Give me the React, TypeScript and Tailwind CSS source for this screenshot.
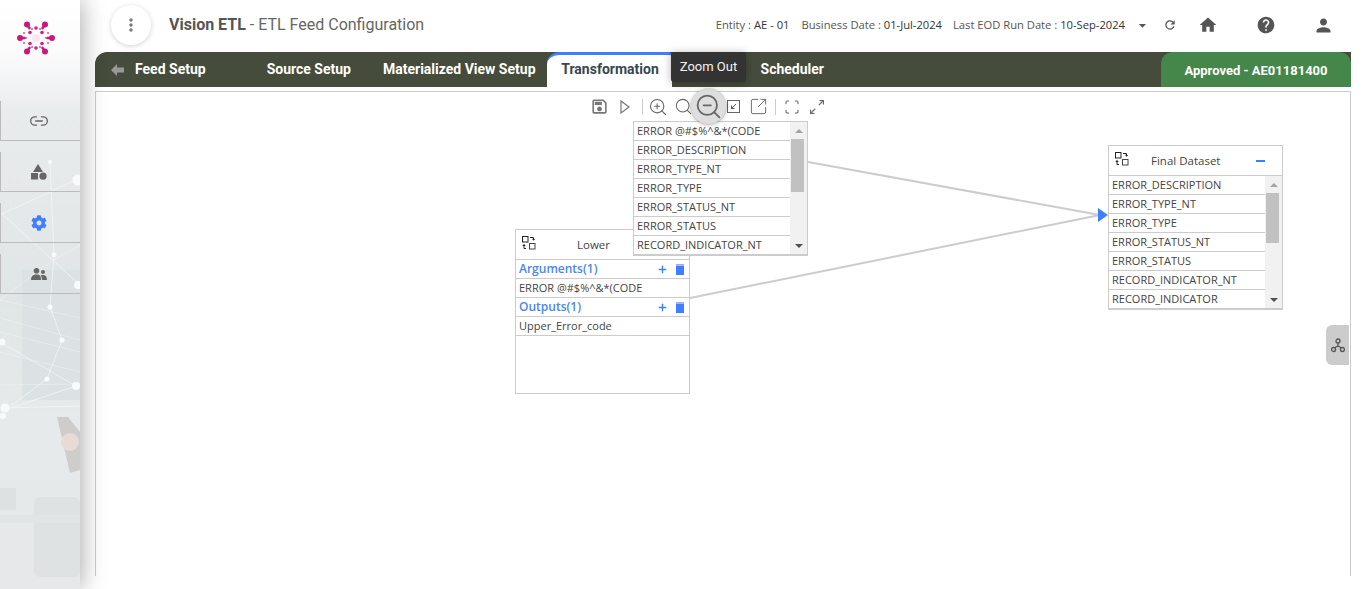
import React from "react";
import { Link2, ZoomIn, Search, ZoomOut, SquareArrowOutUpRight, Scan, Plus } from "lucide-react";
import { FaCog } from "react-icons/fa";
import { MdMoreVert, MdRefresh, MdHome, MdHelp, MdPerson, MdOutlineSave, MdArrowDropDown } from "react-icons/md";
import { BsArrowsAngleExpand } from "react-icons/bs";

const roboto = "font-['Roboto',sans-serif]";
const open = "font-['Open_Sans',sans-serif]";

function Logo() {
  const big: [number, number][] = [[-9, -13.5], [9, -13.5], [-16, 0], [16, 0], [-9, 13.5], [9, 13.5]];
  const mid: [number, number][] = [[0, -10], [0, 10], [-6, -5.5], [6, -5.5], [-6, 5.5], [6, 5.5]];
  const small: [number, number][] = [[-10, 0], [10, 0], [-4, -9], [4, -9], [-4, 9], [4, 9], [-12, -5], [12, -5], [-12, 5], [12, 5]];
  return (
    <svg width="38" height="38" viewBox="0 0 38 38">
      {big.map(([x, y]) => (
        <g key={`${x}${y}`}>
          <line x1={19 + x} y1={19 + y} x2={19 + x * 0.72} y2={19 + y * 0.72} stroke="#c8187f" strokeWidth="2.4" strokeLinecap="round" />
          <circle cx={19 + x} cy={19 + y} r={3} fill="#c8187f" />
        </g>
      ))}
      {mid.map(([x, y]) => <circle key={`${x}${y}`} cx={19 + x} cy={19 + y} r={1.8} fill="#d02085" />)}
      {small.map(([x, y]) => <circle key={`${x}${y}`} cx={19 + x} cy={19 + y} r={1} fill="#e0509f" />)}
      <circle cx="19" cy="19" r="4" fill="#fbe6f1" />
    </svg>
  );
}

function SideBg() {
  return (
    <svg className="absolute inset-0 w-full h-full" viewBox="0 0 80 589" preserveAspectRatio="none">
      <defs>
        <linearGradient id="sb" x1="0" y1="0" x2="0" y2="1">
          <stop offset="0" stopColor="#ffffff" />
          <stop offset="0.09" stopColor="#fbfbfb" />
          <stop offset="0.19" stopColor="#e9eced" />
          <stop offset="0.5" stopColor="#e0e5e6" />
          <stop offset="0.72" stopColor="#e6eaeb" />
          <stop offset="1" stopColor="#e6e8e9" />
        </linearGradient>
      </defs>
      <rect width="80" height="589" fill="url(#sb)" />
      <rect x="22" y="270" width="58" height="130" fill="#dce1e3" />
      <rect x="34" y="497" width="46" height="80" rx="6" fill="#dfe2e3" />
      <rect x="0" y="488" width="16" height="22" fill="#dee1e2" />
      <rect x="0" y="515" width="80" height="8" fill="#e2e5e6" />
      <path d="M57 417 L68 417 L80 432 L80 470 L70 473 Z" fill="#cfcccc" />
      <ellipse cx="70" cy="442" rx="9" ry="9" fill="#e6dcd5" />
      <g stroke="#f3f7f8" strokeWidth="1" fill="none">
        <path d="M0 215 L80 178 M0 212 L80 285 M0 342 L76 386 M50 307 L62 340 L47 379 L5 410 M76 386 L5 410 M0 408 L80 406 M50 162 L54 255 L50 307" opacity="0.75" />
        <path d="M0 300 L80 318 M0 318 L80 340 M0 332 L80 352 M0 352 L80 372 M0 385 L80 384 M80 245 L50 262 L0 300" opacity="0.45" />
      </g>
      <g fill="#f8fbfc">
        <circle cx="50" cy="162" r="2" />
        <circle cx="78" cy="180" r="5.5" />
        <circle cx="54" cy="255" r="2.5" />
        <circle cx="78" cy="285" r="4" />
        <circle cx="50" cy="307" r="2.6" />
        <circle cx="62" cy="340" r="2.6" />
        <circle cx="2" cy="342" r="3.5" />
        <circle cx="47" cy="379" r="2.6" />
        <circle cx="76" cy="386" r="4" />
        <circle cx="5" cy="408" r="4.5" />
        <circle cx="3" cy="416" r="3" />
      </g>
    </svg>
  );
}

function NodeIcon() {
  return (
    <svg width="14" height="14" viewBox="0 0 14 14" fill="none" stroke="#222" strokeWidth="1">
      <rect x="0.5" y="0.5" width="5.5" height="5.5" />
      <rect x="7.5" y="7.5" width="5.5" height="5.5" stroke="#444" />
      <path d="M8 1.5h3.5v2.5M10.3 3l1.2 1.2 1.2-1.2" />
      <path d="M2 8v4.5h2M0.7 9.5h2.6" />
    </svg>
  );
}

function Row({ children }: { children: React.ReactNode }) {
  return (
    <div className={`h-[19px] shrink-0 border-b border-[#ccc] pl-[3px] text-[11px] leading-[18px] text-[#444] whitespace-nowrap ${open}`}>
      {children}
    </div>
  );
}

function ScrollTrack({ top, height }: { top: number; height: number }) {
  return (
    <div className="relative w-[17px] shrink-0 bg-[#f1f1f1]">
      <div className="absolute left-1/2 top-[7px] -translate-x-1/2 border-x-[4px] border-b-[4px] border-x-transparent border-b-[#a3a3a3]" />
      <div className="absolute left-[1px] w-[13px] bg-[#c1c1c1]" style={{ top, height }} />
      <div className="absolute left-1/2 bottom-[6px] -translate-x-1/2 border-x-[4px] border-t-[4px] border-x-transparent border-t-[#505050]" />
    </div>
  );
}

function Section({ label }: { label: string }) {
  return (
    <div className={`h-[19px] shrink-0 border-b border-[#ccc] pl-[3px] pr-[5px] flex items-center justify-between text-[12px] font-semibold text-[#4a86f7] ${open}`}>
      <span>{label}</span>
      <span className="flex items-center gap-[8px] text-[#3f7fff]">
        <Plus size={11} strokeWidth={3} />
        <svg width="8" height="11" viewBox="0 0 8 11">
          <rect x="0" y="0" width="8" height="1" fill="#8fb4fb" />
          <rect x="0" y="1.5" width="8" height="9.5" fill="#3f7fff" />
        </svg>
      </span>
    </div>
  );
}

const upper = ["ERROR @#$%^&*(CODE", "ERROR_DESCRIPTION", "ERROR_TYPE_NT", "ERROR_TYPE", "ERROR_STATUS_NT", "ERROR_STATUS", "RECORD_INDICATOR_NT"];
const finalRows = ["ERROR_DESCRIPTION", "ERROR_TYPE_NT", "ERROR_TYPE", "ERROR_STATUS_NT", "ERROR_STATUS", "RECORD_INDICATOR_NT", "RECORD_INDICATOR"];

function Tab({ children, className }: { children: React.ReactNode; className: string }) {
  return <span className={`text-[14px] font-bold text-white ${className}`}>{children}</span>;
}

const navItem = "h-[40px] border-l border-b border-[#bbb] flex items-center justify-center pr-[4px]";

export default function App() {
  return (
    <div className={`relative flex h-[589px] w-[1366px] overflow-hidden bg-white ${roboto}`}>
      <aside className="relative z-10 w-[80px] shrink-0 shadow-[0_0_26px_rgba(0,0,0,0.38)]">
        <SideBg />
        <div className="relative flex justify-center pt-[19px] pr-[8px] h-[101px]">
          <Logo />
        </div>
        <nav className="relative flex flex-col gap-[11px] text-[#666]">
          <div className={navItem}><Link2 size={20} strokeWidth={1.6} /></div>
          <div className={navItem}>
            <svg width="16" height="16" viewBox="0 0 16 16" fill="#666">
              <path d="M7 0 12 8H2Z" />
              <rect x="0" y="9" width="7" height="6.5" />
              <circle cx="12" cy="12.2" r="3.6" />
            </svg>
          </div>
          <div className={`${navItem} text-[#3f7fff]`}><FaCog size={16} /></div>
          <div className={navItem}>
            <svg width="16" height="12" viewBox="0 0 16 12" fill="#666">
              <circle cx="5.5" cy="2.8" r="2.8" />
              <path d="M0 12c0-4 2-5.5 5.5-5.5S10 8 10 12Z" />
              <circle cx="12" cy="4" r="2" />
              <path d="M11 12c0-2-.3-3.5-1.3-4.6.7-.3 1.4-.4 2.3-.4 2.6 0 4 1.6 4 5Z" />
            </svg>
          </div>
        </nav>
      </aside>

      <main className="relative flex-1 min-w-0 pl-[15px] pr-[15px]">
        <header className="h-[52px] flex items-center">
          <div className="ml-[16px] w-[40px] h-[40px] mt-[-2px] rounded-full bg-white shadow-[0_1px_5px_rgba(0,0,0,0.18)] flex items-center justify-center text-[#777]">
            <MdMoreVert size={20} />
          </div>
          <div className="ml-[18px] mt-[-2px] text-[16px] text-[#666] whitespace-nowrap">
            <span className="font-bold text-[#555]">Vision ETL</span> - ETL Feed Configuration
          </div>
          <div className={`ml-auto mt-[-2px] flex items-center text-[11.2px] text-[#555] whitespace-nowrap ${open}`}>
            <span>Entity : <span className="text-[#333]">AE - 01</span></span>
            <span className="ml-[12px]">Business Date : <span className="text-[#333]">01-Jul-2024</span></span>
            <span className="ml-[11px]">Last EOD Run Date : <span className="text-[#333]">10-Sep-2024</span></span>
            <MdArrowDropDown size={17} className="ml-[9px] text-[#555]" />
            <MdRefresh size={14} className="ml-[12px] text-[#555]" />
            <MdHome size={20} className="ml-[21px] text-[#555]" />
            <MdHelp size={20} className="ml-[38px] text-[#555]" />
            <MdPerson size={21} className="ml-[37px] mr-[17px] text-[#555]" />
          </div>
        </header>

        <div className="relative h-[35px] rounded-t-[12px] rounded-tr-none bg-[#464c3b] flex items-center">
          <svg width="13" height="12" viewBox="0 0 13 12" className="ml-[16px]" fill="#999">
            <path d="M0 6 6 0V3.5H13V8.5H6V12Z" />
          </svg>
          <Tab className="ml-[11px]">Feed Setup</Tab>
          <Tab className="ml-[61px]">Source Setup</Tab>
          <Tab className="ml-[32px]">Materialized View Setup</Tab>
          <div className="ml-[11px] h-[35px] w-[125px] rounded-tl-[12px] rounded-tr-[4px] border-t-[3px] border-[#3f7fff] bg-white flex items-center justify-center pb-[3px] pl-[2px]">
            <span className="text-[14px] font-bold text-[#37474f]">Transformation</span>
          </div>
          <Tab className="ml-[89px]">Scheduler</Tab>
          <div className="ml-auto h-[35px] w-[190px] rounded-t-[12px] bg-[#45864a] flex items-center justify-center pt-[2px]">
            <span className="text-[13px] font-bold text-white">Approved - AE01181400</span>
          </div>
          <div className="absolute left-[576px] top-0 z-20 h-[30px] w-[75px] rounded-[3px] bg-[#333] flex items-center justify-center text-[13px] text-[#f2f2f2] shadow-[0_1px_8px_rgba(0,0,0,0.3)]">
            Zoom Out
          </div>
        </div>

        <section className="relative mt-[4px] h-[485px] border border-b-0 border-[#ccc]">
          <div className="relative flex items-center h-[29px] pl-[494px] text-[#666]">
            <MdOutlineSave size={19} className="text-[#777]" />
            <svg width="10" height="14" viewBox="0 0 10 14" fill="none" stroke="#777" strokeWidth="1.2" className="ml-[11px]">
              <path d="M1 1 9 7 1 13Z" />
            </svg>
            <span className="ml-[12px] h-[16px] w-px bg-[#ccc]" />
            <ZoomIn size={20} strokeWidth={1.3} className="ml-[5px]" />
            <Search size={19} strokeWidth={1.3} className="ml-[6px]" />
            <span className="relative z-10 ml-[-2px] flex h-[35px] w-[35px] items-center justify-center rounded-full bg-[#dedede] shadow-[0_0_0_1px_rgba(0,0,0,0.08),0_1px_4px_rgba(0,0,0,0.25)]">
              <ZoomOut size={29} strokeWidth={1.5} />
            </span>
            <span className="ml-[1px] flex h-[13px] w-[13px] items-center justify-center border border-[#666]">
              <svg width="7" height="7" viewBox="0 0 7 7" fill="none" stroke="#555"><path d="M6 1 1.5 5.5M1.5 2.5v3h3" /></svg>
            </span>
            <SquareArrowOutUpRight size={19} strokeWidth={1.2} className="ml-[9px]" />
            <span className="ml-[7px] h-[16px] w-px bg-[#ccc]" />
            <Scan size={16} strokeWidth={1.6} className="ml-[8px]" />
            <BsArrowsAngleExpand size={14} stroke="currentColor" strokeWidth={0.5} className="ml-[10px]" />
          </div>

          <svg className="absolute left-0 top-0 pointer-events-none" width="1255" height="320">
            <path d="M712 70 L1004 123" stroke="#ccc" strokeWidth="2" fill="none" />
            <path d="M594 206 L1004 123" stroke="#ccc" strokeWidth="2" fill="none" />
            <path d="M1002 116 L1012 123 L1002 130 Z" fill="#3f7fff" />
          </svg>

          <div className="absolute left-[419px] top-[137px] h-[165px] w-[175px] border border-[#ccc] bg-white flex flex-col">
            <div className="h-[30px] shrink-0 border-b border-[#ccc] relative">
              <span className="absolute left-[6px] top-[6px]"><NodeIcon /></span>
              <span className={`absolute left-[61px] top-[6px] text-[11.5px] text-[#444] ${open}`}>Lower</span>
            </div>
            <Section label="Arguments(1)" />
            <Row>ERROR @#$%^&amp;*(CODE</Row>
            <Section label="Outputs(1)" />
            <Row>Upper_Error_code</Row>
          </div>

          <div className="absolute left-[537px] top-[29px] h-[135px] w-[175px] border border-b-2 border-[#ccc] bg-white flex">
            <div className="flex-1 min-w-0 flex flex-col">
              {upper.map((t, i) => (i === upper.length - 1 ? <div key={t} className={`h-[18px] pl-[3px] text-[11px] leading-[18px] text-[#444] ${open}`}>{t}</div> : <Row key={t}>{t}</Row>))}
            </div>
            <ScrollTrack top={17} height={53} />
          </div>

          <div className="absolute left-[1012px] top-[53px] h-[165px] w-[175px] border border-b-2 border-[#ccc] bg-white flex flex-col">
            <div className="h-[30px] shrink-0 border-b border-[#ccc] relative">
              <span className="absolute left-[6px] top-[6px]"><NodeIcon /></span>
              <span className={`absolute left-[42px] top-[6px] text-[11.5px] text-[#444] ${open}`}>Final Dataset</span>
              <span className="absolute right-[17px] top-[14px] h-[2px] w-[9px] bg-[#3f7fff]" />
            </div>
            <div className="flex flex-1 min-h-0">
              <div className="flex-1 min-w-0 flex flex-col">
                {finalRows.map((t, i) => (i === finalRows.length - 1 ? <div key={t} className={`h-[18px] pl-[3px] text-[11px] leading-[18px] text-[#444] ${open}`}>{t}</div> : <Row key={t}>{t}</Row>))}
              </div>
              <ScrollTrack top={17} height={50} />
            </div>
          </div>

          <div className="absolute right-[1px] top-[233px] h-[40px] w-[23px] rounded-l-[6px] bg-[#ccc] flex items-center justify-center">
            <svg width="14" height="15" viewBox="0 0 14 15" fill="none" stroke="#555" strokeWidth="1.3">
              <circle cx="7" cy="3" r="2" />
              <circle cx="2.6" cy="11.5" r="2" />
              <circle cx="11.4" cy="11.5" r="2" />
              <path d="M7 5v3M7 8 3.6 9.8M7 8l3.4 1.8" />
            </svg>
          </div>
        </section>
      </main>
    </div>
  );
}
